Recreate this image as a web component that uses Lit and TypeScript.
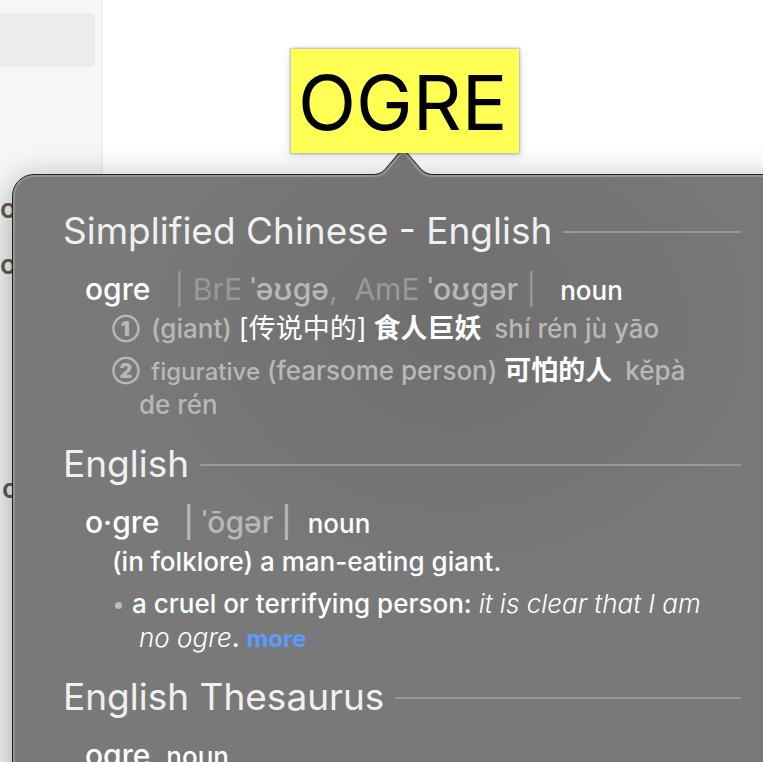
import { LitElement, html, css } from "lit";
import { customElement } from "lit/decorators.js";

@customElement("page-sidebar")
export class PageSidebar extends LitElement {
  static styles = css`
    :host {
      display: block;
      box-sizing: border-box;
      background: #f7f7f5;
      border-right: 2px solid #efefee;
      padding-top: 13px;
      color: #5f5e5b;
      font-size: 27px;
      font-weight: 600;
      line-height: 56px;
    }
    .selected {
      height: 54px;
      margin-right: 6px;
      margin-bottom: 114px;
      border-radius: 0 6px 6px 0;
      background: #ececeb;
    }
    .row {
      height: 56px;
    }
    .gap {
      height: 168px;
    }
    .inset {
      padding-left: 2px;
    }
  `;

  render() {
    return html`
      <div class="selected"></div>
      <div class="row">o</div>
      <div class="row">o</div>
      <div class="gap"></div>
      <div class="row inset">o</div>
    `;
  }
}

@customElement("dictionary-section")
export class DictionarySection extends LitElement {
  static properties = { heading: { type: String } };
  declare heading: string;

  static styles = css`
    :host {
      display: block;
    }
    .title {
      display: flex;
      align-items: center;
      gap: 11px;
      margin: 0 0 16px;
      font-size: 37px;
      font-weight: 400;
      line-height: 48px;
      color: #f0f0f0;
      white-space: nowrap;
    }
    .title::after {
      content: "";
      flex: 1;
      height: 2px;
      margin-top: 2px;
      background: #989898;
    }
    .body {
      padding-left: 22px;
    }
  `;

  render() {
    return html`
      <h2 class="title">${this.heading}</h2>
      <div class="body"><slot></slot></div>
    `;
  }
}

@customElement("app-root")
export class AppRoot extends LitElement {
  static styles = css`
    :host {
      display: grid;
      grid-template-columns: 103px 1fr;
      position: relative;
      height: 100vh;
      overflow: hidden;
      background: #fff;
      font-family: Inter, "Noto Sans CJK SC", sans-serif;
    }
    .content {
      padding: 49px 0 0 188px;
    }
    .word {
      display: inline-block;
      position: relative;
      z-index: 2;
      padding: 5px 12px 3px 7px;
      background: #ffff54;
      box-shadow: 0 0 2px 1px rgba(0, 0, 0, 0.25), 0 2px 10px rgba(0, 0, 0, 0.15);
      font-size: 76px;
      line-height: 96px;
      color: #000;
    }
    .popover {
      position: absolute;
      top: 174px;
      left: 12px;
      right: -28px;
      bottom: -60px;
      box-sizing: border-box;
      padding: 32px 49px 0;
      border: 1px solid #222;
      border-radius: 22px;
      background: radial-gradient(ellipse 340px 270px at 440px 150px, #6e6f6e, #747474 55%, #797979);
      box-shadow: inset 0 0 0 2px #939393, 0 8px 36px rgba(0, 0, 0, 0.36);
    }
    .arrow {
      position: absolute;
      top: -25px;
      left: 358px;
      width: 64px;
      height: 27px;
    }
    .sections {
      display: flex;
      flex-direction: column;
      gap: 18px;
      padding-left: 1px;
    }
    .entry {
      margin: 0;
      font-size: 30px;
      line-height: 36px;
      font-weight: 500;
      color: #fff;
      white-space: pre;
    }
    .say {
      color: #b8b8b8;
    }
    .dim {
      font-weight: 400;
      color: #999;
    }
    .pos {
      font-size: 26px;
    }
    .senses {
      display: flex;
      flex-direction: column;
      gap: 8px;
      margin: 3px 0 0;
      padding: 0 24px 0 54px;
      list-style: none;
      font-size: 26px;
      font-weight: 500;
      line-height: 34px;
      color: #b8b8b8;
    }
    .senses li {
      text-indent: -27px;
    }
    .num {
      display: inline-block;
      width: 39px;
      text-indent: 0;
      font-size: 20px;
      font-weight: 900;
      line-height: 20px;
      vertical-align: 2px;
    }
    .label {
      font-size: 24px;
      line-height: 24px;
    }
    .white {
      color: #fff;
    }
    .han {
      font-size: 27px;
      font-weight: 400;
      line-height: 24px;
      color: #fff;
    }
    .strong {
      font-weight: 700;
    }
    .pinyin {
      margin-left: 6px;
    }
    .bullet {
      display: inline-block;
      width: 7px;
      height: 7px;
      margin: 0 10px 4px 3px;
      border-radius: 50%;
      background: #bcbcbc;
    }
    .example {
      font-style: italic;
      font-weight: 300;
      color: #fff;
    }
    .more {
      font-size: 24px;
      font-weight: 700;
      line-height: 24px;
      color: #5a9bff;
      text-decoration: none;
    }
  `;

  render() {
    return html`
      <page-sidebar></page-sidebar>
      <main class="content"><span class="word">OGRE</span></main>
      <article class="popover">
        <svg class="arrow" viewBox="0 0 64 27" aria-hidden="true">
          <path d="M0 27V24H2C9 24 12 22 16 17L27 4Q32 -2 37 4L49 18C53 22 56 24 62 24H64V27Z" fill="#757575" />
          <path d="M0 26H3C11 26 14 23 18 18L28 6Q32 1 36 6L47 19C51 24 54 26 61 26H64" fill="none" stroke="#939393" stroke-width="2" />
          <path d="M0 24.5H2C9 24.5 12 22 16 17L27 4Q32 -2 37 4L49 18C53 22 56 24.5 62 24.5H64" fill="none" stroke="#222" />
        </svg>
        <div class="sections">
          <dictionary-section heading="Simplified Chinese - English">
            <p class="entry">ogre  <span class="say"> <span class="dim">| BrE</span> ˈəʊɡə<span class="dim">,  AmE</span> ˈoʊɡər <span class="dim">|</span></span>   <span class="pos">noun</span></p>
            <ol class="senses">
              <li><span class="num">①</span>(giant) <span class="han">[传说中的]</span> <span class="han strong">食人巨妖</span> <span class="pinyin">shí rén jù yāo</span></li>
              <li><span class="num">②</span><span class="label">figurative</span> (fearsome person) <span class="han strong">可怕的人</span> <span class="pinyin">kěpà de rén</span></li>
            </ol>
          </dictionary-section>
          <dictionary-section heading="English">
            <p class="entry">o·gre  <span class="say"> | ˈōɡər |</span>  <span class="pos">noun</span></p>
            <ul class="senses">
              <li class="white">(in folklore) a man-eating giant.</li>
              <li class="white"><span class="bullet"></span>a cruel or terrifying person: <span class="example">it is clear that I am no ogre</span>. <a class="more" href="#more">more</a></li>
            </ul>
          </dictionary-section>
          <dictionary-section heading="English Thesaurus">
            <p class="entry">ogre  <span class="pos">noun</span></p>
          </dictionary-section>
        </div>
      </article>
    `;
  }
}
